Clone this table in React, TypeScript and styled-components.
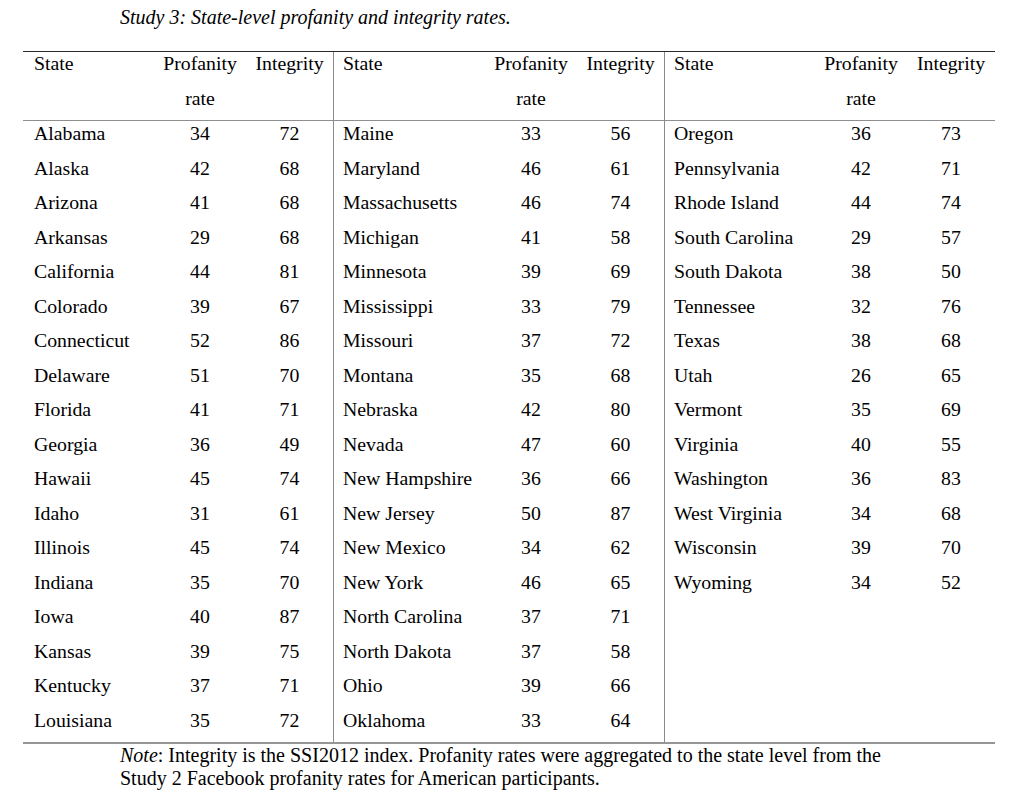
import styled, { createGlobalStyle } from 'styled-components';

const GlobalStyle = createGlobalStyle`
  html, body {
    margin: 0;
    background: #fff;
  }
  body {
    font-family: "Liberation Serif", "Times New Roman", serif;
    color: #000;
  }
`;

type Entry = [string, number, number];

const panels: Entry[][] = [
  [
    ['Alabama', 34, 72],
    ['Alaska', 42, 68],
    ['Arizona', 41, 68],
    ['Arkansas', 29, 68],
    ['California', 44, 81],
    ['Colorado', 39, 67],
    ['Connecticut', 52, 86],
    ['Delaware', 51, 70],
    ['Florida', 41, 71],
    ['Georgia', 36, 49],
    ['Hawaii', 45, 74],
    ['Idaho', 31, 61],
    ['Illinois', 45, 74],
    ['Indiana', 35, 70],
    ['Iowa', 40, 87],
    ['Kansas', 39, 75],
    ['Kentucky', 37, 71],
    ['Louisiana', 35, 72]
  ],
  [
    ['Maine', 33, 56],
    ['Maryland', 46, 61],
    ['Massachusetts', 46, 74],
    ['Michigan', 41, 58],
    ['Minnesota', 39, 69],
    ['Mississippi', 33, 79],
    ['Missouri', 37, 72],
    ['Montana', 35, 68],
    ['Nebraska', 42, 80],
    ['Nevada', 47, 60],
    ['New Hampshire', 36, 66],
    ['New Jersey', 50, 87],
    ['New Mexico', 34, 62],
    ['New York', 46, 65],
    ['North Carolina', 37, 71],
    ['North Dakota', 37, 58],
    ['Ohio', 39, 66],
    ['Oklahoma', 33, 64]
  ],
  [
    ['Oregon', 36, 73],
    ['Pennsylvania', 42, 71],
    ['Rhode Island', 44, 74],
    ['South Carolina', 29, 57],
    ['South Dakota', 38, 50],
    ['Tennessee', 32, 76],
    ['Texas', 38, 68],
    ['Utah', 26, 65],
    ['Vermont', 35, 69],
    ['Virginia', 40, 55],
    ['Washington', 36, 83],
    ['West Virginia', 34, 68],
    ['Wisconsin', 39, 70],
    ['Wyoming', 34, 52]
  ]
];

const ROWS = 18;

const Page = styled.div`
  padding: 6px 0 0 23px;
  width: 972px;
`;

const Caption = styled.div`
  margin-left: 97px;
  font-size: 20px;
  line-height: 22px;
  font-style: italic;
`;

const Table = styled.div`
  margin-top: 23px;
  display: grid;
  grid-template-columns: 131px 92px 87px 152px 92px 87px 151px 92px 88px;
  border-top: 1px solid #2b2b2b;
  border-bottom: 2px solid #969696;
  font-size: 19.8px;
`;

const Cell = styled.div<{ $align?: 'left' | 'center'; $split?: 'first' | 'panel'; $head?: boolean }>`
  box-sizing: border-box;
  height: 34.5px;
  line-height: 22px;
  padding-top: 1px;
  white-space: nowrap;
  text-align: ${p => p.$align ?? 'center'};
  padding-left: ${p => (p.$split === 'first' ? '11px' : p.$split === 'panel' ? '9px' : '0')};
  border-left: ${p => (p.$split === 'panel' ? '1px solid #8a8a8a' : 'none')};
  ${p =>
    p.$head &&
    `
    height: 69px;
    padding-top: 0;
    border-bottom: 1px solid #8f8f8f;
  `}
`;

const HeadLine = styled.span`
  display: block;
  height: 34.5px;
`;

const Note = styled.div`
  margin-left: 97px;
  width: 775px;
  font-size: 20px;
  line-height: 23px;
`;

const splitFor = (panel: number) => (panel === 0 ? 'first' : 'panel');

export default function App() {
  return (
    <Page>
      <GlobalStyle />
      <Caption>Study 3: State-level profanity and integrity rates.</Caption>
      <Table>
        {panels.map((_, i) => [
          <Cell key={`s${i}`} $head $align="left" $split={splitFor(i)}>
            <HeadLine>State</HeadLine>
          </Cell>,
          <Cell key={`p${i}`} $head>
            <HeadLine>Profanity</HeadLine>
            <HeadLine>rate</HeadLine>
          </Cell>,
          <Cell key={`i${i}`} $head>
            <HeadLine>Integrity</HeadLine>
          </Cell>
        ])}
        {Array.from({ length: ROWS }, (_, r) =>
          panels.map((panel, i) => {
            const row = panel[r];
            return [
              <Cell key={`s${r}-${i}`} $align="left" $split={splitFor(i)}>
                {row?.[0]}
              </Cell>,
              <Cell key={`p${r}-${i}`}>{row?.[1]}</Cell>,
              <Cell key={`i${r}-${i}`}>{row?.[2]}</Cell>
            ];
          })
        )}
      </Table>
      <Note>
        <i>Note</i>: Integrity is the SSI2012 index. Profanity rates were aggregated to the state level from the Study 2
        Facebook profanity rates for American participants.
      </Note>
    </Page>
  );
}
